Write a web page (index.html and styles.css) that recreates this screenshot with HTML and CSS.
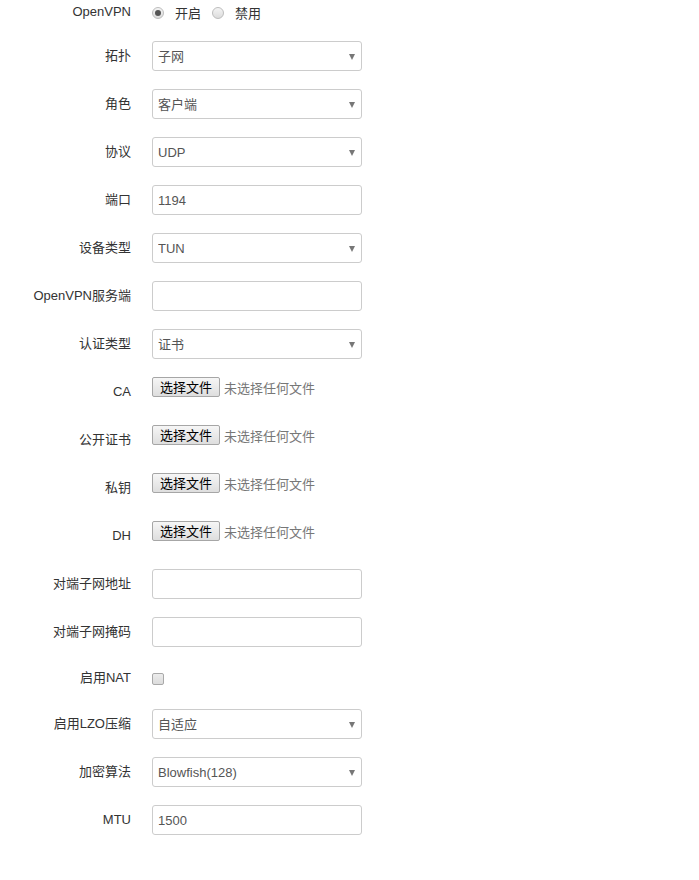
FILE: index.html
```html
<!DOCTYPE html>
<html lang="zh-CN">
<head>
<meta charset="utf-8">
<title>OpenVPN</title>
<link rel="stylesheet" href="styles.css">
</head>
<body>
<form class="form">
  <div class="row row-first">
    <label class="lbl">OpenVPN</label>
    <div class="ctl radios">
      <label class="opt"><input type="radio" name="en" class="radio" checked><span>开启</span></label>
      <label class="opt"><input type="radio" name="en" class="radio"><span>禁用</span></label>
    </div>
  </div>
  <div class="row">
    <label class="lbl">拓扑</label>
    <div class="ctl sel"><select><option>子网</option></select></div>
  </div>
  <div class="row">
    <label class="lbl">角色</label>
    <div class="ctl sel"><select><option>客户端</option></select></div>
  </div>
  <div class="row">
    <label class="lbl">协议</label>
    <div class="ctl sel"><select><option>UDP</option></select></div>
  </div>
  <div class="row">
    <label class="lbl">端口</label>
    <div class="ctl"><input class="txt" type="text" value="1194"></div>
  </div>
  <div class="row">
    <label class="lbl">设备类型</label>
    <div class="ctl sel"><select><option>TUN</option></select></div>
  </div>
  <div class="row">
    <label class="lbl">OpenVPN服务端</label>
    <div class="ctl"><input class="txt" type="text" value=""></div>
  </div>
  <div class="row">
    <label class="lbl">认证类型</label>
    <div class="ctl sel"><select><option>证书</option></select></div>
  </div>
  <div class="row">
    <label class="lbl">CA</label>
    <div class="ctl file"><span class="fbtn">选择文件</span><span class="fname">未选择任何文件</span></div>
  </div>
  <div class="row">
    <label class="lbl">公开证书</label>
    <div class="ctl file"><span class="fbtn">选择文件</span><span class="fname">未选择任何文件</span></div>
  </div>
  <div class="row">
    <label class="lbl">私钥</label>
    <div class="ctl file"><span class="fbtn">选择文件</span><span class="fname">未选择任何文件</span></div>
  </div>
  <div class="row">
    <label class="lbl">DH</label>
    <div class="ctl file"><span class="fbtn">选择文件</span><span class="fname">未选择任何文件</span></div>
  </div>
  <div class="row">
    <label class="lbl">对端子网地址</label>
    <div class="ctl"><input class="txt" type="text" value=""></div>
  </div>
  <div class="row">
    <label class="lbl">对端子网掩码</label>
    <div class="ctl"><input class="txt" type="text" value=""></div>
  </div>
  <div class="row row-check">
    <label class="lbl">启用NAT</label>
    <div class="ctl"><input type="checkbox" class="check"></div>
  </div>
  <div class="row">
    <label class="lbl">启用LZO压缩</label>
    <div class="ctl sel"><select><option>自适应</option></select></div>
  </div>
  <div class="row">
    <label class="lbl">加密算法</label>
    <div class="ctl sel"><select><option>Blowfish(128)</option></select></div>
  </div>
  <div class="row">
    <label class="lbl">MTU</label>
    <div class="ctl"><input class="txt" type="text" value="1500"></div>
  </div>
</form>
</body>
</html>
```
FILE: styles.css
```css
html, body {
  margin: 0;
  padding: 0;
  background: #fff;
}
body {
  font-family: "Liberation Sans", Arial, "Noto Sans CJK SC", sans-serif;
  font-size: 13px;
  color: #333;
}
.form {
  display: flex;
  flex-direction: column;
  gap: 18px;
}
.row {
  display: grid;
  grid-template-columns: 131px 210px;
  column-gap: 21px;
  height: 30px;
  align-items: center;
}
.row-first {
  height: 24px;
  margin-bottom: -1px;
}
.row-check {
  height: 26px;
}
.lbl {
  text-align: right;
  color: #333;
  white-space: nowrap;
  line-height: 16px;
}
.ctl {
  height: 100%;
  display: flex;
  align-items: center;
}
.radios {
  gap: 0;
}
.opt {
  display: flex;
  align-items: center;
  color: #333;
  margin-right: 11px;
}
.opt span {
  margin-left: 11px;
}
.radio {
  -webkit-appearance: none;
  appearance: none;
  width: 12px;
  height: 12px;
  margin: 1px 0 0 0;
  border: 1px solid #bdbdbd;
  border-radius: 50%;
  background: linear-gradient(#f4f4f4, #dcdcdc);
  position: relative;
  box-sizing: border-box;
}
.radio:checked::after {
  content: "";
  position: absolute;
  left: 2px;
  top: 2px;
  width: 6px;
  height: 6px;
  border-radius: 50%;
  background: #555;
}
.sel {
  position: relative;
}
.sel select {
  -webkit-appearance: none;
  appearance: none;
  width: 210px;
  height: 30px;
  box-sizing: border-box;
  border: 1px solid #ccc;
  border-radius: 3px;
  background: #fff;
  padding: 0 20px 0 5px;
  font-family: "Liberation Sans", Arial, "Noto Sans CJK SC", sans-serif;
  font-size: 13px;
  color: #555;
  outline: none;
}
.sel::after {
  content: "";
  position: absolute;
  right: 7px;
  top: 13px;
  width: 0;
  height: 0;
  border-left: 3.5px solid transparent;
  border-right: 3.5px solid transparent;
  border-top: 6px solid #777;
  pointer-events: none;
}
.txt {
  width: 210px;
  height: 30px;
  box-sizing: border-box;
  border: 1px solid #ccc;
  border-radius: 3px;
  padding: 0 5px;
  font-family: "Liberation Sans", Arial, "Noto Sans CJK SC", sans-serif;
  font-size: 13px;
  color: #555;
  outline: none;
}
.file {
  align-self: start;
  height: 20px;
  white-space: nowrap;
}
.fbtn {
  display: inline-flex;
  align-items: center;
  justify-content: center;
  box-sizing: border-box;
  width: 68px;
  height: 20px;
  border: 1px solid #a6a6a6;
  border-radius: 2px;
  background: linear-gradient(#f6f6f6, #dedede);
  color: #000;
  font-size: 13px;
  font-family: "Noto Sans CJK SC", sans-serif;
  line-height: 18px;
}
.fname {
  margin-left: 4px;
  color: #777;
  font-size: 13px;
  font-family: "Noto Sans CJK SC", sans-serif;
}
.check {
  -webkit-appearance: none;
  appearance: none;
  width: 12px;
  height: 12px;
  margin: 1px 0 0 0;
  box-sizing: border-box;
  border: 1px solid #a9a9a9;
  border-radius: 2px;
  background: linear-gradient(#ececec, #dcdcdc);
}
```
